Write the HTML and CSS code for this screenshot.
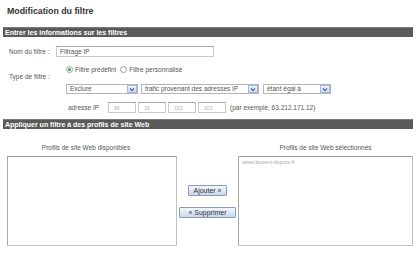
FILE: index.html
```html
<!DOCTYPE html>
<html lang="fr">
<head>
<meta charset="utf-8">
<title>Modification du filtre</title>
<link rel="stylesheet" href="styles.css">
</head>
<body>
<div class="page">
  <h1 class="title">Modification du filtre</h1>
  <div class="bar">Entrer les informations sur les filtres</div>

  <div class="form">
    <div class="label l-name">Nom du filtre :</div>
    <div class="field name-field"><div class="input name-input">Filtrage IP</div></div>

    <div class="label l-type">Type de filtre :</div>
    <div class="field radios">
      <span class="radio on"></span><span class="rlabel">Filtre prédéfini</span>
      <span class="radio"></span><span class="rlabel">Filtre personnalisé</span>
    </div>
    <div class="field selects">
      <div class="select s1"><span class="stext">Exclure</span><span class="arrow"><svg viewBox="0 0 10 9" width="10" height="9"><path d="M2.5 3.2 L5 5.8 L7.5 3.2" fill="none" stroke="#2c56a8" stroke-width="1.4"/></svg></span></div>
      <div class="select s2"><span class="stext">trafic provenant des adresses IP</span><span class="arrow"><svg viewBox="0 0 10 9" width="10" height="9"><path d="M2.5 3.2 L5 5.8 L7.5 3.2" fill="none" stroke="#2c56a8" stroke-width="1.4"/></svg></span></div>
      <div class="select s3"><span class="stext">étant égal à</span><span class="arrow"><svg viewBox="0 0 10 9" width="10" height="9"><path d="M2.5 3.2 L5 5.8 L7.5 3.2" fill="none" stroke="#2c56a8" stroke-width="1.4"/></svg></span></div>
    </div>
    <div class="field ip">
      <span class="iplabel">adresse IP</span>
      <div class="input ipbox"><span class="ipval">66</span></div>
      <div class="input ipbox"><span class="ipval">18</span></div>
      <div class="input ipbox"><span class="ipval">152</span></div>
      <div class="input ipbox"><span class="ipval">103</span></div>
      <span class="example">(par exemple, 63.212.171.12)</span>
    </div>
  </div>

  <div class="bar bar2">Appliquer un filtre à des profils de site Web</div>

  <div class="profiles">
    <div class="col left">
      <div class="colhead">Profils de site Web disponibles</div>
      <div class="listbox lb-left"></div>
    </div>
    <div class="buttons">
      <button class="btn btn-add">Ajouter »</button>
      <button class="btn btn-del">« Supprimer</button>
    </div>
    <div class="col right">
      <div class="colhead">Profils de site Web sélectionnés</div>
      <div class="listbox lb-right"><div class="item">www.laurent-dupuis.fr</div></div>
    </div>
  </div>
</div>
</body>
</html>
```

FILE: styles.css
```css
* { box-sizing: border-box; }
html, body { margin: 0; padding: 0; background: #fff; }
body {
  font-family: "Liberation Sans", Arial, sans-serif;
  font-size: 6.5px;
  color: #555;
  width: 420px;
  height: 253px;
  overflow: hidden;
}
.page { padding: 0; }

.title {
  margin: 0;
  padding: 5px 0 0 7px;
  font-size: 8.8px;
  line-height: 12px;
  font-weight: bold;
  color: #333;
}

.bar {
  margin: 10px 7px 0 3px;
  height: 10px;
  line-height: 10px;
  background: #5a5a5a;
  border-top: 1px solid #7a7a7a;
  color: #fff;
  font-weight: bold;
  font-size: 7px;
  padding-left: 2px;
  white-space: nowrap;
}
.bar2 { margin-top: 6px; }

.form {
  display: grid;
  grid-template-columns: 47px 1fr;
  padding-left: 9px;
  margin-top: 9px;
}
.label { color: #555; white-space: nowrap; }
.l-name { grid-row: 1; grid-column: 1; align-self: center; }
.l-type { grid-row: 2 / 4; grid-column: 1; align-self: center; margin-top: 2px; }
.name-field { grid-row: 1; grid-column: 2; }
.radios { grid-row: 2; grid-column: 2; }
.selects { grid-row: 3; grid-column: 2; }
.ip { grid-row: 4; grid-column: 2; }

.input {
  height: 11px;
  border: 1px solid #c8c8c8;
  border-top-color: #a8a8a8;
  background: #fff;
  line-height: 9px;
  padding-left: 3px;
  color: #555;
}
.name-input { width: 158px; }

.radios {
  display: flex;
  align-items: center;
  height: 10px;
  margin-top: 7px;
  padding-left: 10px;
}
.radio {
  width: 7px;
  height: 7px;
  border: 1px solid #8fa0b0;
  border-radius: 50%;
  background: #fff;
  position: relative;
  margin-right: 2px;
}
.radio.on::after {
  content: "";
  position: absolute;
  left: 1px; top: 1px;
  width: 3px; height: 3px;
  border-radius: 50%;
  background: #3ca43c;
}
.rlabel { margin-right: 4px; }

.selects {
  display: flex;
  gap: 3px;
  margin-top: 10px;
  padding-left: 10px;
}
.select {
  height: 10px;
  border: 1px solid #b4b4b4;
  background: #fff;
  display: flex;
  align-items: center;
  justify-content: space-between;
  padding-left: 3px;
  color: #555;
}
.s1 { width: 72px; }
.s2 { width: 118px; }
.s3 { width: 68px; margin-left: 1px; }
.stext { white-space: nowrap; overflow: hidden; line-height: 8px; }
.arrow {
  width: 10px;
  height: 8px;
  flex: none;
  border: 1px solid #a9bcd6;
  background: linear-gradient(#eef3fb, #c8d7ee);
  display: flex;
  align-items: center;
  justify-content: center;
}
.arrow svg { width: 8px; height: 7px; }

.ip {
  display: flex;
  align-items: center;
  margin-top: 8px;
  padding-left: 12px;
}
.iplabel { margin-right: 9px; }
.ipbox { width: 28px; margin-right: 2px; }
.ipval { color: #b0b0b0; font-size: 5px; padding-left: 2px; }
.example { margin-left: 2px; }

.profiles {
  display: grid;
  grid-template-columns: 170px 61px 175px;
  margin-left: 7px;
  margin-top: 15px;
}
.col { display: flex; flex-direction: column; }
.colhead {
  text-align: center;
  height: 12px;
  line-height: 8px;
  color: #555;
}
.left .colhead { padding-right: 12px; }
.listbox {
  height: 90px;
  border: 1px solid #c0c0c0;
  border-top-color: #a0a0a0;
  border-left-color: #a8a8a8;
  background: #fff;
}
.item {
  color: #aaa;
  font-size: 5.5px;
  padding: 2px 0 0 3px;
  line-height: 7px;
}
.buttons {
  display: flex;
  flex-direction: column;
  align-items: center;
  justify-content: center;
  gap: 11px;
  padding-top: 12px;
}
.btn {
  font-family: "Liberation Sans", Arial, sans-serif;
  font-size: 7px;
  color: #333;
  height: 11px;
  line-height: 9px;
  border: 1px solid #8a9cb8;
  background: linear-gradient(#f2f6fc, #c9d7ea);
  border-radius: 1px;
}
.btn-add { padding: 0 4px; }
.btn-del { padding: 0 8px; }
```
